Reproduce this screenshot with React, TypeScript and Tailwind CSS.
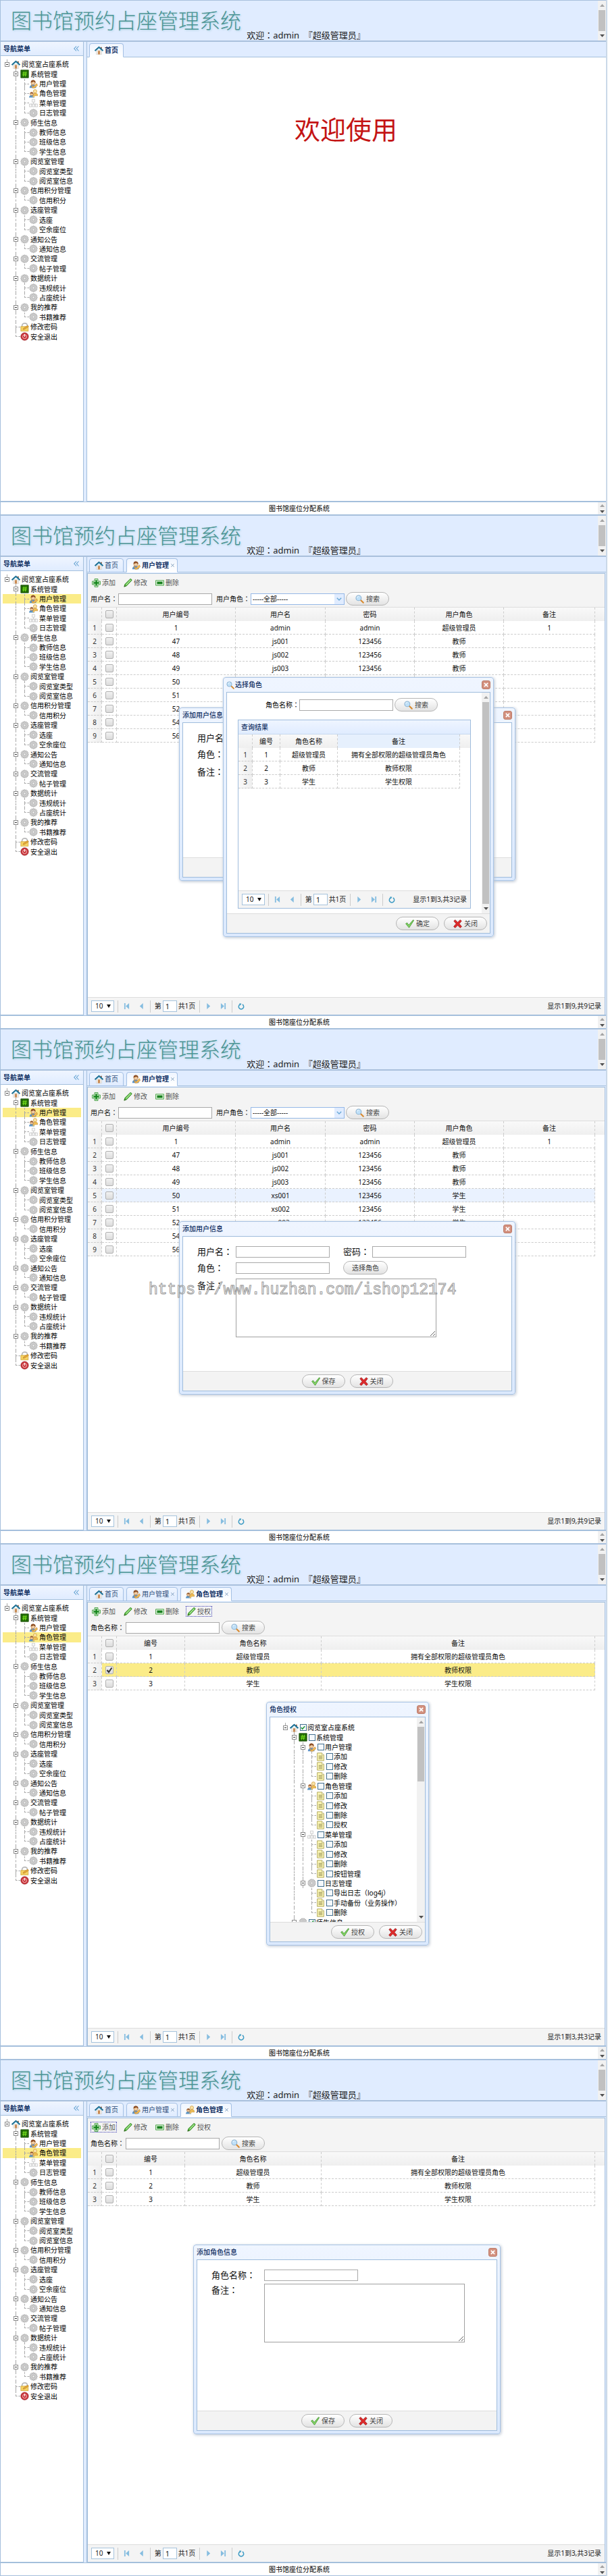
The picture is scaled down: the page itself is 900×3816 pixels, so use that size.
import React, { useId } from "react";

type IconName =
  | "home" | "system" | "user" | "role" | "menu" | "gear" | "lock" | "power" | "page"
  | "add" | "edit" | "remove" | "search" | "ok" | "cancel";

function Icon({ name, className = "size-[13px]" }: { name: IconName; className?: string }) {
  const shapes: Record<IconName, React.ReactNode> = {
    home: (
      <>
        <path d="M3 8h10v7.5H3z" fill="#f2efec" stroke="#c9c4be" strokeWidth=".6" />
        <path d="M6 9h4v6.5H6z" fill="#c98d56" />
        <path d="M11 2.2h2.2v3.6L11 4z" fill="#8a5a3a" />
        <path d="M8 .8 16 8l-1.6 1.8L8 4.4 1.6 9.8 0 8z" fill="#2f8fae" />
        <path d="M8 .8 16 8l-.8.9L8 2.6.8 8.9 0 8z" fill="#1d5f86" />
      </>
    ),
    system: (
      <>
        <path d="M1 1h14v14H1z" fill="#226a08" stroke="#174c04" />
        <path d="M6.8 3.5 5.6 12.5M10.4 3.5 9.2 12.5M4 6.3h8M3.8 9.6h8" stroke="#7ff01e" strokeWidth="1.2" fill="none" />
      </>
    ),
    user: (
      <>
        <path d="M1 15c0-4 3-6 6.500-6 3.500 0 5.500 2.500 5.500 6z" fill="#5d93c9" />
        <path d="m4 9 3.500 4L14 7l1.500 3.500L10 15H6z" fill="#f0b956" stroke="#bf8227" strokeWidth=".7" />
        <circle cx="7.500" cy="5.300" r="4" fill="#f3cfa3" stroke="#a8652f" strokeWidth=".7" />
        <path d="M3.300 5.200C3 1.500 6 .3 8.500.8c2.600.5 3.700 2.500 3 4.700C10 5.300 9 4.300 8.400 3.300 7 4.600 5 5 3.300 5.200z" fill="#8d4f25" />
      </>
    ),
    role: (
      <>
        <path d="M7 12c0-3 2-4.500 4.500-4.500S16 9 16 12z" fill="#f0be55" stroke="#c08a26" strokeWidth=".7" />
        <circle cx="11" cy="4" r="3.200" fill="#f9e2a8" stroke="#cf9a34" strokeWidth=".9" />
        <path d="M0 15.500c0-3 2-4.700 4.500-4.700S10 12.500 10 15.500z" fill="#5a94c4" />
        <path d="m4 11 2 2.500 3-2.500 2 1.500-3 3z" fill="#efbd5c" />
        <circle cx="4.800" cy="8.600" r="3" fill="#f3cfa3" stroke="#a8652f" strokeWidth=".7" />
        <path d="M1.800 8.200c.2-3 5.700-3.200 6 .2-2.300 0-3.500-1-6-.2z" fill="#94582c" />
      </>
    ),
    menu: (
      <g fill="#f7f7f7" stroke="#bdbdbd" strokeWidth=".8">
        <path d="M8 6v4M2.800 10h10.400" />
        <path d="M5.500 1.500h5v5h-5zM.6 10h4.300v5H.6zM5.900 10h4.300v5H5.900zM11.200 10h4.300v5h-4.300z" />
      </g>
    ),
    gear: (
      <>
        <g stroke="#a3a3a3" strokeWidth="2.400">
          <path d="M8 .3v15.400M.3 8h15.400M2.600 2.600l10.800 10.800M13.400 2.600 2.600 13.400M5 .9l6 14.200M.9 11l14.200-6M.9 5l14.200 6M11 .9 5 15.100" strokeWidth="1.500" />
        </g>
        <circle cx="8" cy="8" r="5.800" fill="#d2d2d2" stroke="#adadad" strokeWidth=".8" />
        <circle cx="8" cy="8" r="3.300" fill="none" stroke="#b9b9b9" strokeWidth=".7" />
        <circle cx="8" cy="8" r="1.700" fill="#fff" stroke="#999" strokeWidth=".7" />
      </>
    ),
    lock: (
      <>
        <path d="M3 7.500C3 2.500 5 1 8 1s5 1.500 5 5" fill="none" stroke="#b8b8b8" strokeWidth="2" />
        <path d="M1 7h13.500v8.500H1z" fill="#f6d365" stroke="#c79c2b" strokeWidth=".8" />
        <path d="m5 12.500 1-2.500 7.500-5 1.800 2L8 12z" fill="#e7a93a" stroke="#a9731c" strokeWidth=".6" />
      </>
    ),
    power: (
      <>
        <circle cx="8" cy="8" r="7" fill="#c9343a" stroke="#94272b" strokeWidth=".8" />
        <circle cx="8" cy="8.300" r="3.600" fill="none" stroke="#f6c9c9" strokeWidth="1.200" />
        <path d="M8 3.500v5" stroke="#fff" strokeWidth="1.500" />
      </>
    ),
    page: (
      <>
        <path d="M2 1h8.500L14 4.500V15H2z" fill="#fbf6b4" stroke="#a49a4d" strokeWidth="1" />
        <path d="M10.500 1v3.500H14" fill="#fff" stroke="#a49a4d" strokeWidth=".8" />
        <path d="M4.500 6.500h7M4.500 9h7M4.500 11.500h7" stroke="#77713c" strokeWidth="1" />
      </>
    ),
    add: (
      <>
        <path d="M5 .8h6V5h4.200v6H11v4.200H5V11H.8V5H5z" fill="#e9f8e6" stroke="#3c9a3a" strokeWidth="1.200" />
        <path d="M6.500 2.800h3v3.700h3.700v3H9.500v3.700h-3V9.500H2.800v-3h3.700z" fill="#15861b" />
      </>
    ),
    edit: (
      <>
        <path d="m1 15 1.200-4.500L12 .9c1-.8 3.500 1.300 2.700 2.600L5.400 13.400z" fill="#58b840" stroke="#2f8423" strokeWidth="1" />
        <path d="m4.500 11.500 8.400-8.800" stroke="#c2efae" strokeWidth="1.300" />
        <path d="m1 15 .8-2.700 2 1.800z" fill="#35541f" />
      </>
    ),
    remove: (
      <>
        <path d="M.7 3.500h14.600v9H.7z" fill="#dff4dc" stroke="#4da64a" strokeWidth="1.200" />
        <path d="M3 5.700h10v4.600H3z" fill="#17801c" />
      </>
    ),
    search: (
      <>
        <path d="m9.500 9.500 5 5" stroke="#d88a2f" strokeWidth="2.600" strokeLinecap="round" />
        <circle cx="6" cy="6" r="4.800" fill="#bfe0f8" stroke="#8ab0cf" strokeWidth="1.300" />
        <path d="M3.300 5.500C3.700 3.800 5 3 6.500 3" stroke="#fff" strokeWidth="1.200" fill="none" />
      </>
    ),
    ok: <path d="m.8 7.800 2.400-1.600 3 4.300L14.200 1l1.300.7L6.800 15z" fill="#8fdc6c" stroke="#318a22" strokeWidth="1" />,
    cancel: (
      <path
        d="M1 2.800 3.500.8 8 5.200 12.500.8 15 2.800 11 8l4.300 5-2.800 2.300L8 10.800l-4.500 4.500L.7 13 5 8z"
        fill="#df2b2b" stroke="#96191c" strokeWidth=".9"
      />
    ),
  };
  return (
    <svg viewBox="0 0 16 16" aria-hidden="true" className={`${className} shrink-0`}>
      {shapes[name]}
    </svg>
  );
}

function Colon() {
  return <span className="font-['Noto_Sans_CJK_JP',sans-serif]">：</span>;
}

/* ---------- scroll bars ---------- */

function Arrow({ up = false, dark = false }: { up?: boolean; dark?: boolean }) {
  return (
    <svg viewBox="0 0 7 4" aria-hidden="true" className={`h-1 w-[7px] shrink-0 ${dark ? "fill-[#505050]" : "fill-[#a3a3a3]"}`}>
      <path d={up ? "M0 4 3.500 0 7 4z" : "M0 0 3.500 4 7 0z"} />
    </svg>
  );
}

function ScrollBar({ thumb }: { thumb: string }) {
  return (
    <div aria-hidden="true" className="flex w-3 shrink-0 flex-col items-center bg-[#f1f1f1]">
      <span className="flex h-[14px] shrink-0 items-center"><Arrow up /></span>
      <span className="flex w-full min-h-0 flex-1 justify-center">
        <span className={`w-[10px] bg-[#c1c1c1] ${thumb}`} />
      </span>
      <span className="flex h-[14px] shrink-0 items-center"><Arrow dark /></span>
    </div>
  );
}

/* ---------- tree ---------- */

type Node = {
  label: string;
  icon: IconName;
  cells: string; // one letter per indent cell: b blank, v line, j joint, e last joint, x expander, r root expander
  checked?: boolean;
};

function Cell({ kind }: { kind: string }) {
  const line = "border-[#a8a8a8]";
  if (kind === "b") return <span className="w-[13px] shrink-0" />;
  if (kind === "v")
    return (
      <span className="flex w-[13px] shrink-0 justify-end">
        <span className={`w-[7px] border-l border-dashed ${line}`} />
      </span>
    );
  if (kind === "x" || kind === "r")
    return (
      <span className="flex w-[13px] shrink-0 flex-col items-center">
        <span className={`w-0 flex-1 border-l border-dashed ${line}`} />
        <span className="flex size-[7px] shrink-0 items-center justify-center border border-[#8c8c8c] bg-white">
          <span className="h-px w-[3px] bg-[#333]" />
        </span>
        <span className={kind === "r" ? "flex-1" : `w-0 flex-1 border-l border-dashed ${line}`} />
      </span>
    );
  return (
    <span className="flex w-[13px] shrink-0 justify-end">
      <span className="flex w-[7px] flex-col">
        <span className={`flex-1 border-b border-l border-dashed ${line}`} />
        <span className={kind === "j" ? `flex-1 border-l border-dashed ${line}` : "flex-1"} />
      </span>
    </span>
  );
}

function TreeRow({ node, selected, checkable }: { node: Node; selected?: boolean; checkable?: boolean }) {
  const id = useId();
  return (
    <li className={`flex flex-1 items-stretch text-[10px] leading-[14px] whitespace-nowrap text-black ${selected ? "bg-[#fbec88]" : ""}`}>
      {node.cells.split("").map((c, i) => <Cell key={i} kind={c} />)}
      <span className="flex items-center">
        <Icon name={node.icon} />
        {checkable ? (
          <>
            <span className="relative ml-px flex size-[11px] items-center justify-center">
              <input
                id={id}
                type="checkbox"
                defaultChecked={node.checked}
                className="peer size-[10px] appearance-none border border-[#44708f] bg-[#f4f8fb]"
              />
              <svg viewBox="0 0 10 10" aria-hidden="true" className="pointer-events-none absolute size-[9px] opacity-0 peer-checked:opacity-100">
                <path d="m2 4.500 2 2.500 4-4.500" fill="none" stroke="#23983a" strokeWidth="1.700" />
              </svg>
            </span>
            <label htmlFor={id} className="pl-px">{node.label}</label>
          </>
        ) : (
          <a href="#" className="pl-[2px]">{node.label}</a>
        )}
      </span>
    </li>
  );
}

const navNodes: Node[] = [
  { label: "阅览室占座系统", icon: "home", cells: "r" },
  { label: "系统管理", icon: "system", cells: "bx" },
  { label: "用户管理", icon: "user", cells: "bvj" },
  { label: "角色管理", icon: "role", cells: "bvj" },
  { label: "菜单管理", icon: "menu", cells: "bvj" },
  { label: "日志管理", icon: "gear", cells: "bve" },
  { label: "师生信息", icon: "gear", cells: "bx" },
  { label: "教师信息", icon: "gear", cells: "bvj" },
  { label: "班级信息", icon: "gear", cells: "bvj" },
  { label: "学生信息", icon: "gear", cells: "bve" },
  { label: "阅览室管理", icon: "gear", cells: "bx" },
  { label: "阅览室类型", icon: "gear", cells: "bvj" },
  { label: "阅览室信息", icon: "gear", cells: "bve" },
  { label: "信用积分管理", icon: "gear", cells: "bx" },
  { label: "信用积分", icon: "gear", cells: "bve" },
  { label: "选座管理", icon: "gear", cells: "bx" },
  { label: "选座", icon: "gear", cells: "bvj" },
  { label: "空余座位", icon: "gear", cells: "bve" },
  { label: "通知公告", icon: "gear", cells: "bx" },
  { label: "通知信息", icon: "gear", cells: "bve" },
  { label: "交流管理", icon: "gear", cells: "bx" },
  { label: "帖子管理", icon: "gear", cells: "bve" },
  { label: "数据统计", icon: "gear", cells: "bx" },
  { label: "违规统计", icon: "gear", cells: "bvj" },
  { label: "占座统计", icon: "gear", cells: "bve" },
  { label: "我的推荐", icon: "gear", cells: "bx" },
  { label: "书籍推荐", icon: "gear", cells: "bve" },
  { label: "修改密码", icon: "lock", cells: "bj" },
  { label: "安全退出", icon: "power", cells: "be" },
];

const permNodes: Node[] = [
  { label: "阅览室占座系统", icon: "home", cells: "r", checked: true },
  { label: "系统管理", icon: "system", cells: "bx" },
  { label: "用户管理", icon: "user", cells: "bvx" },
  { label: "添加", icon: "page", cells: "bvvj" },
  { label: "修改", icon: "page", cells: "bvvj" },
  { label: "删除", icon: "page", cells: "bvve" },
  { label: "角色管理", icon: "role", cells: "bvx" },
  { label: "添加", icon: "page", cells: "bvvj" },
  { label: "修改", icon: "page", cells: "bvvj" },
  { label: "删除", icon: "page", cells: "bvvj" },
  { label: "授权", icon: "page", cells: "bvve" },
  { label: "菜单管理", icon: "menu", cells: "bvx" },
  { label: "添加", icon: "page", cells: "bvvj" },
  { label: "修改", icon: "page", cells: "bvvj" },
  { label: "删除", icon: "page", cells: "bvvj" },
  { label: "按钮管理", icon: "page", cells: "bvve" },
  { label: "日志管理", icon: "gear", cells: "bvx" },
  { label: "导出日志（log4j）", icon: "page", cells: "bvbj" },
  { label: "手动备份（业务操作）", icon: "page", cells: "bvbj" },
  { label: "删除", icon: "page", cells: "bvbe" },
  { label: "师生信息", icon: "gear", cells: "bx", checked: true },
];

/* ---------- controls ---------- */

function PillButton({ icon, children }: { icon?: IconName; children: React.ReactNode }) {
  return (
    <button
      type="button"
      className="flex h-5 min-w-16 shrink-0 items-center justify-center gap-[3px] rounded-full border border-[#b5b5b5] bg-linear-to-b from-white to-[#e3e3e3] px-3 text-[10px] text-[#444]"
    >
      {icon && <Icon name={icon} />}
      {children}
    </button>
  );
}

const inputClass = "h-[17px] w-[139px] border border-[#a9a9a9] bg-white px-1 text-[10px]";

function Check({ label, checked }: { label: string; checked?: boolean }) {
  return (
    <span className="relative flex items-center justify-center">
      <input
        type="checkbox"
        aria-label={label}
        defaultChecked={checked}
        className="peer size-3 appearance-none rounded-[2px] border border-[#b0b0b0] bg-linear-to-b from-[#f2f2f2] to-[#dcdcdc]"
      />
      <svg viewBox="0 0 10 10" aria-hidden="true" className="pointer-events-none absolute size-[10px] opacity-0 peer-checked:opacity-100">
        <path d="m1.500 5 2.500 3 4.500-6.500" fill="none" stroke="#333" strokeWidth="2" />
      </svg>
    </span>
  );
}

function PagerButton({ label, d }: { label: string; d: string }) {
  return (
    <button type="button" aria-label={label} className="flex h-[18px] w-[22px] items-center justify-center">
      <svg viewBox="0 0 10 10" className="size-[9px]">
        <path d={d} className="fill-[#86bde0]" />
      </svg>
    </button>
  );
}

function Divider() {
  return <span className="h-[18px] w-px shrink-0 bg-[#ccc]" />;
}

function Pager({ summary }: { summary: string }) {
  return (
    <div className="flex h-[26px] shrink-0 items-center border-t border-[#ddd] bg-[#f4f4f4] pl-[5px] pr-[5px] text-[10px] text-[#222]">
      <span className="relative flex">
        <select aria-label="每页条数" className="h-[17px] w-[34px] appearance-none border border-[#a6c3dc] bg-white pl-[5px] text-[10px]">
          <option>10</option>
        </select>
        <svg viewBox="0 0 6 5" aria-hidden="true" className="pointer-events-none absolute top-[6px] right-[5px] h-[5px] w-[6px]">
          <path d="M0 0h6L3 5z" fill="#111" />
        </svg>
      </span>
      <div className="ml-[5px] flex items-center">
        <Divider />
        <div className="flex w-[47px] items-center justify-center">
          <PagerButton label="第一页" d="M1 0h2v10H1zM9 0v10L3.500 5z" />
          <PagerButton label="上一页" d="M7.500 0v10L2 5z" />
        </div>
        <Divider />
        <label className="flex w-[72px] items-center justify-center gap-[2px]">
          第
          <input defaultValue="1" className="h-[17px] w-[21px] border border-[#a6c3dc] bg-white pl-[3px] text-[11px]" />
          共1页
        </label>
        <Divider />
        <div className="flex w-[47px] items-center justify-center">
          <PagerButton label="下一页" d="M2.500 0v10L8 5z" />
          <PagerButton label="最后一页" d="M7 0h2v10H7zM1 0v10l5.500-5z" />
        </div>
        <Divider />
        <button type="button" aria-label="刷新" className="flex h-[18px] w-[26px] items-center justify-center">
          <svg viewBox="0 0 10 10" className="size-[10px]">
            <path d="M6.800 2A3.700 3.700 0 1 1 3.200 2" fill="none" stroke="#3d9bc4" strokeWidth="1.500" />
            <path d="m2.300.2 3.200.6L3.600 3.800z" fill="#3d9bc4" />
          </svg>
        </button>
      </div>
      <span className="ml-auto whitespace-nowrap">{summary}</span>
    </div>
  );
}

/* ---------- data grid ---------- */

type Col = { title: string; w: string; hot?: boolean };

function Grid({ cols, rows, checks, selected, hover, tail }: {
  cols: Col[]; rows: string[][]; checks?: boolean; selected?: number; hover?: number; tail: string;
}) {
  const cell = "h-5 overflow-hidden border-r border-b border-dashed border-[#ccc] p-0 text-center font-normal whitespace-nowrap";
  const head = "h-5 border-r border-dashed border-r-[#ccc] p-0 text-center font-normal";
  return (
    <table className="w-full table-fixed border-separate border-spacing-0 text-[10px] leading-[14px] text-[#111]">
      <colgroup>
        <col className="w-[21px]" />
        {checks && <col className="w-[22px]" />}
        {cols.map((c) => <col key={c.title} className={c.w} />)}
        <col className={tail} />
      </colgroup>
      <thead>
        <tr className="bg-linear-to-b from-[#f9f9f9] to-[#efefef]">
          <th className={head} />
          {checks && <th className={head}><Check label="全选" /></th>}
          {cols.map((c) => <th key={c.title} className={`${head} ${c.hot ? "bg-[#e6f0fd]" : ""}`}>{c.title}</th>)}
          <th className="p-0" />
        </tr>
      </thead>
      <tbody>
        {rows.map((r, i) => {
          const tone = selected === i ? "bg-[#fbec88]" : hover === i ? "bg-[#eaf2ff]" : "";
          return (
            <tr key={i}>
              <td className={`${cell} bg-linear-to-r from-[#f9f9f9] to-[#efefef] text-[#333]`}>{i + 1}</td>
              {checks && <td className={`${cell} ${tone}`}><Check label={`选择第${i + 1}行`} checked={selected === i} /></td>}
              {r.map((t, k) => <td key={k} className={`${cell} ${tone}`}>{t}</td>)}
              <td className="p-0" />
            </tr>
          );
        })}
      </tbody>
    </table>
  );
}

const userCols: Col[] = [
  { title: "用户编号", w: "w-[176px]" },
  { title: "用户名", w: "w-[133px]" },
  { title: "密码", w: "w-[132px]" },
  { title: "用户角色", w: "w-[132px]" },
  { title: "备注", w: "" },
];
const userRows = [
  ["1", "admin", "admin", "超级管理员", "1"],
  ["47", "js001", "123456", "教师", ""],
  ["48", "js002", "123456", "教师", ""],
  ["49", "js003", "123456", "教师", ""],
  ["50", "xs001", "123456", "学生", ""],
  ["51", "xs002", "123456", "学生", ""],
  ["52", "xs003", "123456", "学生", ""],
  ["54", "xs004", "123456", "学生", ""],
  ["56", "xs005", "123456", "学生", ""],
];
const roleRows = [
  ["1", "超级管理员", "拥有全部权限的超级管理员角色"],
  ["2", "教师", "教师权限"],
  ["3", "学生", "学生权限"],
];

/* ---------- dialogs ---------- */

function Dialog({ title, icon, place, footer, align = "justify-center", children }: {
  title: string; icon?: IconName; place: string; footer?: React.ReactNode; align?: string; children: React.ReactNode;
}) {
  return (
    <div
      role="dialog"
      aria-label={title}
      className={`absolute flex flex-col rounded-[4px] border border-[#a8c3e3] bg-linear-to-b from-[#eff5ff] to-[#dbe9fd] px-1 pb-1 shadow-[1px_1px_4px_#b9c2cf] ${place}`}
    >
      <div className="flex h-[21px] shrink-0 items-center text-[10px] font-bold text-[#0e2d5f]">
        {icon && <Icon name={icon} className="mr-px size-3" />}
        <span className={icon ? "font-medium" : "font-medium"}>{title}</span>
        <button type="button" aria-label="关闭" className="ml-auto flex size-[13px] items-center justify-center rounded-[3px] border border-[#bd7b68] bg-[#d3917f]">
          <svg viewBox="0 0 8 8" className="size-[7px]"><path d="m1 1 6 6M7 1 1 7" stroke="#fff" strokeWidth="2" /></svg>
        </button>
      </div>
      <div className="flex min-h-0 flex-1 flex-col border border-[#9fbcdc] bg-white">
        <div className="flex min-h-0 flex-1 overflow-hidden">{children}</div>
        <div className={`flex h-[29px] shrink-0 items-center gap-[7px] border-t border-[#ddd] bg-[#f3f3f3] ${align}`}>{footer}</div>
      </div>
    </div>
  );
}

function UserForm() {
  const id = useId();
  return (
    <form className="grid w-full grid-cols-[57px_159px_43px_139px] content-start items-center pt-[10px] pl-[21px] text-[13px] whitespace-nowrap text-[#111]">
      <label htmlFor={`${id}n`} className="leading-[23px]">用户名<Colon /></label>
      <input id={`${id}n`} className={inputClass} />
      <label htmlFor={`${id}p`}>密码<Colon /></label>
      <input id={`${id}p`} type="password" className={inputClass} />
      <label htmlFor={`${id}r`} className="leading-[23px]">角色<Colon /></label>
      <input id={`${id}r`} className={inputClass} />
      <div className="col-span-2 flex"><PillButton>选择角色</PillButton></div>
      <label htmlFor={`${id}m`} className="self-start pt-1 leading-[20px]">备注<Colon /></label>
      <textarea id={`${id}m`} className="col-span-3 mt-1 h-[87px] w-[297px] border border-[#a0a0a0] bg-white" />
    </form>
  );
}

const userDialogPlace = "left-[264px] top-[285px] h-[257px] w-[498px]";

function SaveClose() {
  return (
    <>
      <PillButton icon="ok">保存</PillButton>
      <PillButton icon="cancel">关闭</PillButton>
    </>
  );
}

function UserDialog() {
  return (
    <Dialog title="添加用户信息" place={userDialogPlace} footer={<SaveClose />}>
      <UserForm />
    </Dialog>
  );
}

function RolePicker() {
  const id = useId();
  return (
    <Dialog
      title="选择角色"
      icon="search"
      place="left-[329px] top-[240px] h-[385px] w-[401px]"
      align="justify-end pr-1"
      footer={<><PillButton icon="ok">确定</PillButton><PillButton icon="cancel">关闭</PillButton></>}
    >
      <div className="flex flex-1 flex-col">
        <div className="flex h-[36px] items-center justify-center pr-2">
          <label htmlFor={id} className="w-[50px] text-[10px] whitespace-nowrap">角色名称<Colon /></label>
          <input id={id} className={`${inputClass} mr-[2px]`} />
          <PillButton icon="search">搜索</PillButton>
        </div>
        <div className="mt-1 mr-4 mb-[7px] ml-4 flex flex-1 flex-col border border-[#9fbcdc]">
          <div className="flex h-[21px] items-center border-b border-[#c6d8ee] bg-linear-to-b from-[#eff5ff] to-[#e0ecff] px-1 text-[10px] font-medium text-[#0e2d5f]">
            查询结果
          </div>
          <div className="flex-1">
            <Grid
              cols={[
                { title: "编号", w: "w-[41px]" },
                { title: "角色名称", w: "w-[85px]" },
                { title: "备注", w: "", hot: true },
              ]}
              rows={roleRows}
              tail="w-[15px]"
            />
          </div>
          <Pager summary="显示1到3,共3记录" />
        </div>
      </div>
      <ScrollBar thumb="h-full" />
    </Dialog>
  );
}

function PermissionDialog() {
  return (
    <Dialog
      title="角色授权"
      place="left-[393px] top-[234px] h-[361px] w-[241px]"
      align="justify-end pr-1"
      footer={<><PillButton icon="ok">授权</PillButton><PillButton icon="cancel">关闭</PillButton></>}
    >
      <ul className="mt-2 flex h-[303px] flex-1 flex-col pl-4">
        {permNodes.map((n, i) => <TreeRow key={i} node={n} checkable />)}
      </ul>
      <ScrollBar thumb="h-[81px]" />
    </Dialog>
  );
}

function RoleDialog() {
  const id = useId();
  return (
    <Dialog title="添加角色信息" place="left-[285px] top-[274px] h-[281px] w-[455px]" footer={<SaveClose />}>
      <form className="grid w-full grid-cols-[78px_297px] content-start items-center pt-[10px] pl-[21px] text-[13px] whitespace-nowrap text-[#111]">
        <label htmlFor={`${id}n`} className="leading-[23px]">角色名称<Colon /></label>
        <input id={`${id}n`} className={inputClass} />
        <label htmlFor={`${id}m`} className="self-start leading-[20px]">备注<Colon /></label>
        <textarea id={`${id}m`} className="mt-px h-[87px] border border-[#a0a0a0] bg-white" />
      </form>
    </Dialog>
  );
}

/* ---------- frame ---------- */

type Tab = { label: string; icon: IconName; closable?: boolean };
const tabs: Tab[] = [
  { label: "首页", icon: "home" },
  { label: "用户管理", icon: "user", closable: true },
  { label: "角色管理", icon: "role", closable: true },
];

function Frame({ height, openTabs, selected, overlay, children }: {
  height: string; openTabs: number; selected?: string; overlay?: React.ReactNode; children: React.ReactNode;
}) {
  return (
    <section className={`relative mr-px flex flex-col border-r-2 border-l border-r-[#c9d8e8] border-l-[#a4bfdc] bg-white ${height}`}>
      <header className="flex h-[62px] shrink-0 border-t border-b-2 border-t-[#a9c0dc] border-b-[#a9c0dc] bg-[#e0ecff]">
        <div className="flex flex-1 flex-col">
          <h1 className="pt-[16px] pl-[15px] text-[31px] leading-[26px] font-light text-[#4b9494] [text-shadow:1px_1px_3px_#a9cfdc]">
            图书馆预约占座管理系统
          </h1>
          <p className="pl-5 text-center text-[13px] leading-[17px] whitespace-pre text-[#222]">
            欢迎<Colon />admin  『超级管理员』
          </p>
        </div>
        <ScrollBar thumb="h-full" />
      </header>

      <div className="flex min-h-0 flex-1 bg-[#e0ecff]">
        <aside className="flex w-[123px] shrink-0 flex-col border-r border-b border-[#a4bfdc] bg-white">
          <div className="flex h-[21px] items-center justify-between border-b border-[#a4bfdc] bg-linear-to-b from-[#eff5ff] to-[#e0ecff] pr-[6px] pl-1 text-[10px] font-bold text-[#0e2d5f]">
            导航菜单
            <button type="button" aria-label="折叠菜单">
              <svg viewBox="0 0 8 8" className="size-2">
                <path d="M4 .5.800 4 4 7.500M7.500.5 4.300 4l3.200 3.500" fill="none" stroke="#5f9fd0" strokeWidth="1.100" />
              </svg>
            </button>
          </div>
          <ul className="mt-[5px] flex h-[418px] flex-col px-[3px]">
            {navNodes.map((n) => <TreeRow key={n.label} node={n} selected={n.label === selected} />)}
          </ul>
        </aside>

        <main className="ml-1 flex min-w-0 flex-1 flex-col border-b border-l border-[#a4bfdc]">
          <div role="tablist" className="flex h-[23px] shrink-0 items-end gap-1 border-b border-[#a4bfdc] pl-[3px]">
            {tabs.slice(0, openTabs).map((t, i) => {
              const active = i === openTabs - 1;
              return (
                <div
                  key={t.label}
                  className={`-mb-px flex h-[21px] items-center rounded-t-[4px] border border-[#a4c0e4] pl-[7px] text-[10px] whitespace-nowrap ${t.closable ? "w-[76px]" : "w-[51px]"} ${active ? "border-b-white bg-linear-to-b from-[#eff5ff] to-white font-bold text-[#0e2d5f]" : "bg-linear-to-b from-[#eff5ff] to-[#e0ecff] text-[#2b4a78]"}`}
                >
                  <button type="button" role="tab" aria-selected={active} className="flex items-center gap-[2px]">
                    <Icon name={t.icon} />
                    {t.label}
                  </button>
                  {t.closable && (
                    <button type="button" aria-label={`关闭${t.label}`} className="ml-[3px]">
                      <svg viewBox="0 0 6 6" className="size-[5px]"><path d="m.5.5 5 5M5.500.5l-5 5" stroke="#6d8fb5" strokeWidth="1.100" /></svg>
                    </button>
                  )}
                </div>
              );
            })}
          </div>
          {children}
        </main>
      </div>

      <footer className="flex h-5 shrink-0 border-t border-b border-[#a4bfdc] bg-white">
        <p className="flex-1 text-center text-[10px] leading-[19px] text-black">图书馆座位分配系统</p>
        <div aria-hidden="true" className="flex w-3 flex-col items-center justify-around bg-[#f1f1f1]">
          <Arrow up />
          <Arrow dark />
        </div>
      </footer>
      {overlay}
    </section>
  );
}

function Panel({ tools, focused, search, summary, children }: {
  tools: { label: string; icon: IconName }[]; focused?: string; search: React.ReactNode; summary: string; children: React.ReactNode;
}) {
  return (
    <div className="flex min-h-0 flex-1 flex-col pt-px pr-px">
      <div className="flex min-h-0 flex-1 flex-col border border-b-0 border-[#a4bfdc] bg-white">
        <div className="border-b border-[#ddd] bg-[#f4f4f4]">
          <div className="flex h-[26px] items-center gap-[10px] pl-[5px]">
            {tools.map((t) => (
              <button
                key={t.label}
                type="button"
                className={`flex items-center gap-[2px] px-px text-[10px] leading-[14px] text-[#555] ${t.label === focused ? "outline-1 outline-dotted outline-[#3a3ab0]" : ""}`}
              >
                <Icon name={t.icon} />
                {t.label}
              </button>
            ))}
          </div>
          <form className="flex h-[23px] items-center pb-px pl-1 text-[10px] whitespace-nowrap text-[#111]">{search}</form>
        </div>
        <div className="flex-1">{children}</div>
        <Pager summary={summary} />
      </div>
    </div>
  );
}

const baseTools: { label: string; icon: IconName }[] = [
  { label: "添加", icon: "add" },
  { label: "修改", icon: "edit" },
  { label: "删除", icon: "remove" },
];

function UserPanel({ hover }: { hover?: number }) {
  const id = useId();
  return (
    <Panel
      tools={baseTools}
      summary="显示1到9,共9记录"
      search={
        <>
          <label htmlFor={`${id}n`} className="w-[41px]">用户名<Colon /></label>
          <input id={`${id}n`} className={inputClass} />
          <label htmlFor={`${id}r`} className="ml-[6px] w-[51px]">用户角色<Colon /></label>
          <span className="relative mr-[2px] flex">
            <select id={`${id}r`} className="h-[17px] w-[139px] appearance-none border border-[#95b8e7] bg-white pl-[2px] text-[10px]">
              <option>-----全部-----</option>
            </select>
            <span aria-hidden="true" className="pointer-events-none absolute inset-y-px right-px flex w-[14px] items-center justify-center bg-[#e0ecff]">
              <svg viewBox="0 0 8 5" className="h-[5px] w-2"><path d="m.8.800 3.200 3.200L7.200.8" fill="none" stroke="#6aa9d6" strokeWidth="1.400" /></svg>
            </span>
          </span>
          <PillButton icon="search">搜索</PillButton>
        </>
      }
    >
      <Grid cols={userCols} rows={userRows} checks hover={hover} tail="w-[14px]" />
    </Panel>
  );
}

function RolePanel({ focused, selected }: { focused: string; selected?: number }) {
  const id = useId();
  return (
    <Panel
      tools={[...baseTools, { label: "授权", icon: "edit" }]}
      focused={focused}
      summary="显示1到3,共3记录"
      search={
        <>
          <label htmlFor={id} className="w-[52px]">角色名称<Colon /></label>
          <input id={id} className={`${inputClass} mr-[3px]`} />
          <PillButton icon="search">搜索</PillButton>
        </>
      }
    >
      <Grid
        cols={[
          { title: "编号", w: "w-[101px]" },
          { title: "角色名称", w: "w-[202px]" },
          { title: "备注", w: "" },
        ]}
        rows={roleRows}
        checks
        selected={selected}
        tail="w-[14px]"
      />
    </Panel>
  );
}

export default function App() {
  return (
    <div className="bg-white font-['Noto_Sans','Noto_Sans_CJK_SC',sans-serif]">
      <Frame height="min-h-[763px]" openTabs={1}>
        <div className="flex-1 bg-white pt-[78px] pr-[2px]">
          <p className="text-center text-[38px] leading-[56px] text-[#c41414]">欢迎使用</p>
        </div>
      </Frame>

      <Frame
        height="min-h-[761px]"
        openTabs={2}
        selected="用户管理"
        overlay={<><UserDialog /><RolePicker /></>}
      >
        <UserPanel />
      </Frame>

      <Frame
        height="min-h-[763px]"
        openTabs={2}
        selected="用户管理"
        overlay={
          <>
            <UserDialog />
            <p className="pointer-events-none absolute top-[370px] left-[219px] font-['Liberation_Mono',monospace] text-[23px] leading-[34px] text-transparent [-webkit-text-stroke:1px_#9c9c9c]">
              https://www.huzhan.com/ishop12174
            </p>
          </>
        }
      >
        <UserPanel hover={4} />
      </Frame>

      <Frame height="min-h-[764px]" openTabs={3} selected="角色管理" overlay={<PermissionDialog />}>
        <RolePanel focused="授权" selected={1} />
      </Frame>

      <Frame height="min-h-[765px]" openTabs={3} selected="角色管理" overlay={<RoleDialog />}>
        <RolePanel focused="添加" />
      </Frame>
    </div>
  );
}
